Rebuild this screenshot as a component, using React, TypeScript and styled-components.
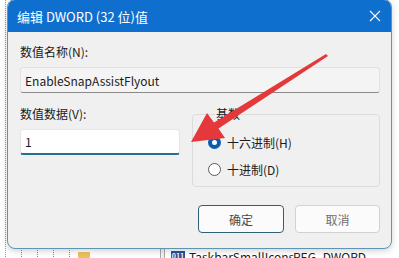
import React from "react";
import styled, { createGlobalStyle } from "styled-components";

const GlobalStyle = createGlobalStyle`
  html, body {
    margin: 0;
    padding: 0;
    background: #f0f0f0;
  }
  body {
    font-family: "Noto Sans CJK SC", "Noto Sans", sans-serif;
    overflow: hidden;
  }
`;

const Desktop = styled.div`
  position: relative;
  width: 399px;
  height: 258px;
  overflow: hidden;
  background: #f0f0f0;
`;

/* registry editor behind the dialog */
const Editor = styled.div`
  display: flex;
  height: 100%;
  background: #ffffff;
`;

const TreePane = styled.div`
  width: 160px;
  display: flex;
  flex-direction: column;
  justify-content: flex-end;
  background: #ffffff;
  background-image: linear-gradient(#9a9a9a 50%, transparent 50%);
  background-size: 1px 2px;
  background-repeat: repeat-y;
  background-position: 5px 0;
`;

const TreeRow = styled.div`
  height: 8px;
  display: flex;
  padding-left: 21px;
  gap: 15px;
`;

const TreeGuide = styled.span`
  width: 1px;
  height: 100%;
  background-image: linear-gradient(#8a8a8a 50%, transparent 50%);
  background-size: 1px 2px;
`;

const Folder = styled.span`
  width: 12px;
  height: 6px;
  margin-top: 2px;
  margin-left: -7px;
  background: #e9c25a;
  border-radius: 1px;
`;

const Splitter = styled.div`
  width: 3px;
  border-left: 1px solid #a8a8a8;
  border-right: 1px solid #a8a8a8;
  background: #f0f0f0;
`;

const ListPane = styled.div`
  flex: 1;
  display: flex;
  flex-direction: column;
  justify-content: flex-end;
  background: #ffffff;
`;

const ListRow = styled.div`
  height: 8px;
  display: flex;
  align-items: flex-start;
  padding-left: 6px;
  font-size: 12px;
  color: #222;
  line-height: 14px;
  white-space: nowrap;
`;

const RegIcon = styled.span`
  flex: none;
  width: 14px;
  height: 10px;
  margin-top: 1px;
  margin-right: 4px;
  background: #2f4f9a;
  color: #fff;
  font-size: 7px;
  line-height: 10px;
  text-align: center;
  font-weight: bold;
`;

const RegName = styled.span`
  flex: none;
  width: 104px;
`;

/* dialog window */
const Window = styled.div`
  position: absolute;
  left: 7px;
  top: -1px;
  width: 383px;
  height: 248px;
  display: flex;
  flex-direction: column;
  background: #f0f0f0;
  border: 1px solid #5f95b0;
  border-radius: 8px;
  overflow: hidden;
  box-shadow: 0 2px 6px rgba(0, 0, 0, 0.18);
`;

const TitleBar = styled.div`
  height: 32px;
  flex: none;
  display: flex;
  align-items: center;
  justify-content: space-between;
  padding: 0 9px 0 9px;
  background: #0e6fcf;
  color: #ffffff;
  font-size: 13px;
`;

const CloseButton = styled.span`
  display: flex;
  width: 12px;
  height: 12px;
  margin-right: 1px;
`;

const Body = styled.div`
  display: flex;
  flex-direction: column;
  padding: 12px 11px 0 12px;
`;

const Label = styled.div`
  font-size: 12px;
  line-height: 16px;
  color: #1b1b1b;
`;

const TextBox = styled.div<{ $readOnly?: boolean }>`
  height: ${(p) => (p.$readOnly ? "24px" : "23px")};
  display: flex;
  align-items: center;
  padding-left: 4px;
  margin-top: 7px;
  font-size: 12px;
  color: #1b1b1b;
  border: 1px solid ${(p) => (p.$readOnly ? "#e2e2e2" : "#e6e6e6")};
  border-bottom: ${(p) => (p.$readOnly ? "1px solid #8a8a8a" : "2px solid #26708f")};
  border-radius: 3px;
  background: ${(p) => (p.$readOnly ? "#f4f4f4" : "#ffffff")};
`;

const Row = styled.div`
  display: grid;
  grid-template-columns: 160px 188px;
  justify-content: space-between;
  margin-top: 13px;
`;

const Column = styled.div`
  display: flex;
  flex-direction: column;
`;

const Group = styled.fieldset`
  margin: 0;
  padding: 11px 0 8px 15px;
  border: 1px solid #dcdcdc;
  border-radius: 4px;
  display: flex;
  flex-direction: column;
  gap: 9px;
`;

const Legend = styled.legend`
  padding: 0 1px;
  margin-left: 7px;
  font-size: 12px;
  line-height: 16px;
  color: #1b1b1b;
`;

const Option = styled.label`
  display: flex;
  align-items: center;
  gap: 6px;
  height: 18px;
  font-size: 12px;
  color: #1b1b1b;
`;

const RadioDot = styled.span<{ $checked?: boolean }>`
  box-sizing: border-box;
  width: 13px;
  height: 13px;
  border-radius: 50%;
  border: ${(p) => (p.$checked ? "4px solid #0b5cad" : "1px solid #5a5a5a")};
  background: #ffffff;
`;

const Buttons = styled.div`
  display: flex;
  justify-content: flex-end;
  gap: 11px;
  margin-top: 18px;
`;

const Button = styled.div<{ $primary?: boolean }>`
  width: ${(p) => (p.$primary ? "84px" : "83px")};
  height: 26px;
  display: flex;
  align-items: center;
  justify-content: center;
  font-size: 12px;
  color: ${(p) => (p.$primary ? "#4a4a4a" : "#6e6e6e")};
  background: #fbfbfb;
  border: 1px solid ${(p) => (p.$primary ? "#2e5f72" : "#d2d2d2")};
  border-radius: 4px;
`;

const Overlay = styled.svg`
  position: absolute;
  left: 0;
  top: 0;
  pointer-events: none;
`;

export default function App() {
  return (
    <>
      <GlobalStyle />
      <Desktop>
        <Editor>
          <TreePane>
            <TreeRow>
              <TreeGuide />
              <TreeGuide />
              <TreeGuide />
              <TreeGuide />
              <Folder />
            </TreeRow>
          </TreePane>
          <Splitter />
          <ListPane>
            <ListRow>
              <RegIcon>011</RegIcon>
              <RegName>TaskbarSmallIcons</RegName>
              <span>REG_DWORD</span>
            </ListRow>
          </ListPane>
        </Editor>

        <Window>
          <TitleBar>
            <span>编辑 DWORD (32 位)值</span>
            <CloseButton>
              <svg width="12" height="12" viewBox="0 0 12 12">
                <path d="M1 1 L11 11 M11 1 L1 11" stroke="#ffffff" strokeWidth="1.1" />
              </svg>
            </CloseButton>
          </TitleBar>
          <Body>
            <Label>数值名称(N):</Label>
            <TextBox $readOnly>EnableSnapAssistFlyout</TextBox>
            <Row>
              <Column>
                <Label>数值数据(V):</Label>
                <TextBox>1</TextBox>
              </Column>
              <Group>
                <Legend>基数</Legend>
                <Option>
                  <RadioDot $checked />
                  十六进制(H)
                </Option>
                <Option>
                  <RadioDot />
                  十进制(D)
                </Option>
              </Group>
            </Row>
            <Buttons>
              <Button $primary>确定</Button>
              <Button>取消</Button>
            </Buttons>
          </Body>
        </Window>

        <Overlay width="399" height="258" viewBox="0 0 399 258">
          <polygon
            points="191,142 225,138 218.5,128.5 328,56 326,54 214,122.5 207,113"
            fill="#e5383b"
          />
        </Overlay>
      </Desktop>
    </>
  );
}
